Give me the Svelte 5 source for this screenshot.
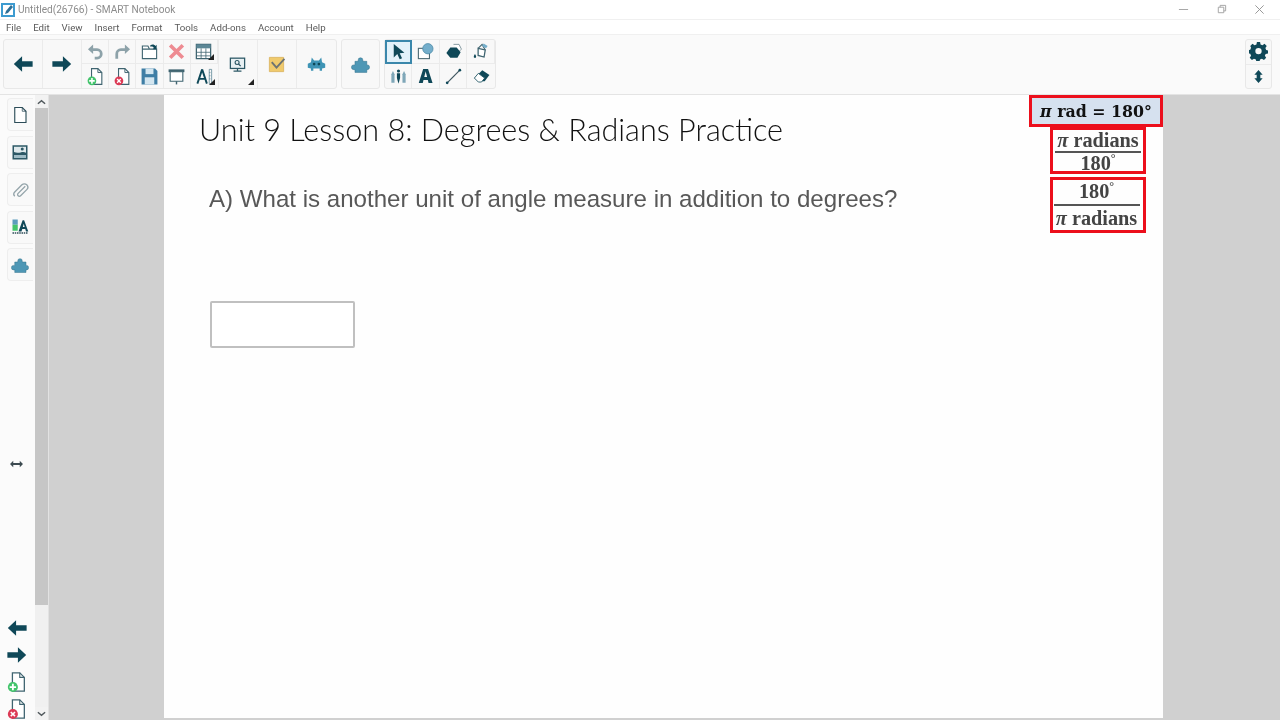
<script lang="ts">
	const menus = ['File', 'Edit', 'View', 'Insert', 'Format', 'Tools', 'Add-ons', 'Account', 'Help'];
	const tabs = ['page', 'gallery', 'attach', 'props', 'addons'];
</script>

{#snippet arrowLeft()}
	<svg class="ic" viewBox="0 0 24 24"><path d="M2 12 11 3.500v5.500h11.500v6H11v5.500z" fill="#0f4858" /></svg>
{/snippet}

{#snippet arrowRight()}
	<svg class="ic" viewBox="0 0 24 24"><path d="M22 12 13 3.500v5.500H1.500v6H13v5.500z" fill="#0f4858" /></svg>
{/snippet}

{#snippet addPage()}
	<svg class="ic" viewBox="0 0 24 24">
		<path d="M7 2h8l5 5v15H7z" fill="#fff" stroke="#3f6470" stroke-width="1.400" />
		<path d="M15 2v5h5" fill="none" stroke="#3f6470" stroke-width="1.200" />
		<circle cx="7.500" cy="17.500" r="5.500" fill="#43c46c" />
		<path d="M7.500 14v7M4 17.500h7" stroke="#fff" stroke-width="2" />
	</svg>
{/snippet}

{#snippet delPage()}
	<svg class="ic" viewBox="0 0 24 24">
		<path d="M7 2h8l5 5v15H7z" fill="#fff" stroke="#3f6470" stroke-width="1.400" />
		<path d="M15 2v5h5" fill="none" stroke="#3f6470" stroke-width="1.200" />
		<circle cx="7.500" cy="17.500" r="5.500" fill="#dc3a55" />
		<path d="M5.200 15.200l4.600 4.600M9.800 15.200l-4.600 4.600" stroke="#fff" stroke-width="1.700" />
	</svg>
{/snippet}

{#snippet puzzle()}
	<svg class="ic" viewBox="0 0 24 24">
		<path d="M9 8V6.500a3 3 0 1 1 6 0V8h5v4.500h.5a3 3 0 1 1 0 6H20V22H5v-3.500H3.500a3 3 0 1 1 0-6H5V8z" fill="#4e97b5" stroke="#2f6f89" stroke-width=".6" />
	</svg>
{/snippet}

<div class="window">
	<header class="titlebar">
		<svg class="app-icon" viewBox="0 0 14 14">
			<rect width="14" height="14" fill="#3d9bd0" />
			<rect x="2" y="2" width="10" height="10" fill="#fff" />
			<path d="M4 11 5 8l5-6 2 2-5 6z" fill="#2f6f95" />
		</svg>
		<span class="doc-title">Untitled(26766) - SMART Notebook</span>
		<div class="win-controls">
			<svg viewBox="0 0 12 12"><path d="M1 6h10" stroke="#a0a0a0" /></svg>
			<svg viewBox="0 0 12 12"><path d="M2.500 3.500h6v6h-6zM4.500 3.500v-2h6v6h-2" fill="none" stroke="#a0a0a0" /></svg>
			<svg viewBox="0 0 12 12"><path d="M1.500 1.500l9 9M10.500 1.500l-9 9" stroke="#909090" /></svg>
		</div>
	</header>

	<nav class="menubar">
		{#each menus as m}
			<span>{m}</span>
		{/each}
	</nav>

	<div class="toolbar">
		<div class="group main-tools">
			<button class="tall nav">{@render arrowLeft()}</button>
			<button class="tall nav">{@render arrowRight()}</button>
			<div class="grid six">
				<button><svg class="ic" viewBox="0 0 24 24"><path d="M9 3 2.500 9 9 15v-3.500h5a3.500 3.500 0 0 1 0 7h-3V22h3a7 7 0 0 0 0-14H9z" fill="#8da2a9" /></svg></button>
				<button><svg class="ic" viewBox="0 0 24 24"><path d="M15 3l6.500 6L15 15v-3.500h-5a3.500 3.500 0 0 0-3.500 3.500v6H3v-6a7 7 0 0 1 7-7h5z" fill="#8da2a9" /></svg></button>
				<button>
					<svg class="ic" viewBox="0 0 24 24">
						<path d="M3 9h18v12H3zM3 9V5h7l2 4" fill="#fff" stroke="#3f6470" stroke-width="1.400" />
						<path d="M13 4c3-1.500 5-1 6.500 1L21 3.500V9h-5l1.500-1.500C16.500 6 15 5.500 13 6z" fill="#0f4858" />
					</svg>
				</button>
				<button><svg class="ic" viewBox="0 0 24 24"><path d="M4 4l16 16M20 4 4 20" stroke="#ee8b92" stroke-width="4.600" /></svg></button>
				<button class="corner">
					<svg class="ic" viewBox="0 0 24 24">
						<rect x="3" y="3" width="18" height="18" fill="#fff" stroke="#3f6470" stroke-width="1.600" />
						<rect x="3" y="3" width="18" height="5" fill="#5c8796" />
						<path d="M3 13h18M3 17.500h18M9 8v13M15 8v13" stroke="#3f6470" />
					</svg>
				</button>
				<button>{@render addPage()}</button>
				<button>{@render delPage()}</button>
				<button>
					<svg class="ic" viewBox="0 0 24 24">
						<path d="M2 2h17l3 3v17H2z" fill="#3f7ea5" />
						<rect x="7" y="2" width="10" height="7" fill="#d4e6f0" />
						<rect x="6" y="13" width="12" height="9" fill="#d4e6f0" />
					</svg>
				</button>
				<button>
					<svg class="ic" viewBox="0 0 24 24">
						<path d="M2 3h20v3.500H2z" fill="#3f6470" />
						<path d="M4 6h16v12H4z" fill="#fff" stroke="#3f6470" stroke-width="1.400" />
						<path d="M12 18v4" stroke="#3f6470" stroke-width="1.800" />
					</svg>
				</button>
				<button class="corner">
					<svg class="ic" viewBox="0 0 24 24">
						<path d="M9 3 3 21M9 3l6 18M5 15h8" fill="none" stroke="#0f4858" stroke-width="2.400" />
						<path d="M18 3h3v18h-3zM18 7h1.500M18 11h1.500M18 15h1.500" fill="none" stroke="#5c8796" />
					</svg>
				</button>
			</div>
			<button class="tall corner wide">
				<svg class="ic" viewBox="0 0 24 24">
					<rect x="3" y="4" width="18" height="13" fill="#e8f0f3" stroke="#2c5866" stroke-width="1.600" />
					<circle cx="11.500" cy="9.500" r="2.500" fill="none" stroke="#2c5866" stroke-width="1.400" />
					<path d="M13.300 11.300 16 14M12 17v3M7 20.500h10" stroke="#2c5866" stroke-width="1.600" />
				</svg>
			</button>
			<button class="tall">
				<svg class="ic" viewBox="0 0 24 24">
					<path d="M3 3h18v18H3z" fill="#f0ca6c" stroke="#d9b05a" />
					<path d="M6 9l6 7 10-11" fill="none" stroke="#6d7372" stroke-width="2.400" />
				</svg>
			</button>
			<button class="tall">
				<svg class="ic" viewBox="0 0 24 24">
					<path d="M6 3l3 4h6l3-4 1 6 4 2v5l-4 1v3h-3v-3H8v3H5v-3l-4-1v-5l4-2z" fill="#3e94b5" />
					<circle cx="9" cy="11.500" r="1.700" fill="#0f4858" />
					<circle cx="15" cy="11.500" r="1.700" fill="#0f4858" />
				</svg>
			</button>
		</div>

		<div class="group">
			<button class="tall addons">{@render puzzle()}</button>
		</div>

		<div class="group">
			<div class="grid four">
				<button class="active"><svg class="ic" viewBox="0 0 24 24"><path d="M6 2.500v17l4.500-4.200 3 6.500 3-1.400-3-6.300 6-.6z" fill="#0f4858" /></svg></button>
				<button>
					<svg class="ic" viewBox="0 0 24 24">
						<rect x="3" y="8" width="14" height="13" fill="#fff" stroke="#4d6a74" stroke-width="1.400" />
						<circle cx="15" cy="8.500" r="6.500" fill="#74aecb" stroke="#4c8aa8" />
					</svg>
				</button>
				<button>
					<svg class="ic" viewBox="0 0 24 24">
						<path d="M12 3h7l3 6-3 3" fill="#fff" stroke="#6a838b" />
						<path d="M8 7h8l5 6-4 7H8l-5-6z" fill="#0f4858" />
					</svg>
				</button>
				<button>
					<svg class="ic" viewBox="0 0 24 24">
						<path d="M9 8l9 2-1.500 9-7.500-2z" fill="#fff" stroke="#3f6470" stroke-width="1.600" />
						<path d="M9 8l5-5 4 7" fill="none" stroke="#3f6470" stroke-width="1.400" />
						<path d="M5 15c-2 3-2 5 0 5s2-2 0-5z" fill="#0f4858" />
						<path d="M16 2l5 3-2 3-5-3z" fill="#74aecb" />
					</svg>
				</button>
				<button>
					<svg class="ic" viewBox="0 0 24 24">
						<path d="M5 5l-2 4v11h4V9z" fill="#7fa7b8" />
						<circle cx="12" cy="5" r="2" fill="#0f4858" />
						<path d="M10 8h4v6l-2 7-2-7z" fill="#0f4858" />
						<path d="M19 5l-2 4v11h4V9z" fill="#7fa7b8" />
					</svg>
				</button>
				<button><span class="big-a">A</span></button>
				<button>
					<svg class="ic" viewBox="0 0 24 24">
						<path d="M4 20 20 4" stroke="#3f5660" stroke-width="1.500" />
						<circle cx="4" cy="20" r="1.700" fill="#0f4858" />
						<circle cx="20" cy="4" r="1.700" fill="#0f4858" />
					</svg>
				</button>
				<button>
					<svg class="ic" viewBox="0 0 24 24">
						<path d="M13 4l9 6-6 8H8l-5-4z" fill="#0f4858" />
						<path d="M3 14l5-6 8 6-4 5H8z" fill="#fff" stroke="#0f4858" />
					</svg>
				</button>
			</div>
		</div>

		<div class="group side-tools">
			<button class="half">
				<svg class="ic" viewBox="0 0 24 24">
					<path fill="#0f4858" fill-rule="evenodd" d="M10 2h4l.6 3 2.400 1 2.600-1.700 2.800 2.800L20.700 9.700l1 2.300 2.300.6v3.800l-3 .6-1 2.400 1.700 2.600-2.800 2.800-2.600-1.700-2.400 1-.6 2.900h-4l-.6-3-2.400-1-2.600 1.700-2.800-2.800 1.700-2.600-1-2.400-3-.6v-4l3-.6 1-2.400L1.600 7.100 4.400 4.300 7 6l2.400-1zM12 9.500a4 4 0 1 0 0 8 4 4 0 0 0 0-8z" transform="translate(0 -2)" />
				</svg>
			</button>
			<button class="half">
				<svg class="ic small" viewBox="0 0 12 16"><path d="M6 1 10.500 6H8v4h2.500L6 15l-4.500-5H4V6H1.500z" fill="#0f4858" /></svg>
			</button>
		</div>
	</div>

	<div class="body">
		<aside class="sidebar">
			<div class="tabs">
				{#each tabs as t}
					<div class="tab">
						{#if t === 'page'}
							<svg class="ic" viewBox="0 0 24 24"><path d="M5 2h10l5 5v15H5z" fill="#fff" stroke="#2c4c58" stroke-width="1.500" /><path d="M15 2v5h5" fill="none" stroke="#2c4c58" /></svg>
						{:else if t === 'gallery'}
							<svg class="ic" viewBox="0 0 24 24"><rect x="2" y="3" width="20" height="19" fill="#2c5866" /><path d="M4 5h16v8c-5-3-9 2-16-1z" fill="#dfe9ec" /><circle cx="15" cy="8" r="2" fill="#2c5866" /><rect x="4" y="16" width="16" height="4" fill="#9fbcc6" /></svg>
						{:else if t === 'attach'}
							<svg class="ic" viewBox="0 0 24 24"><path d="M19 7 9.500 16.500a2.300 2.300 0 0 0 3.300 3.300L21 11.500a4.500 4.500 0 0 0-6.400-6.400L5 14.700a4 4 0 0 0 0 5.600" fill="none" stroke="#95a5ab" stroke-width="1.800" /></svg>
						{:else if t === 'props'}
							<svg class="ic" viewBox="0 0 24 24"><rect x="2" y="2" width="7" height="7" fill="#5c9cbd" /><rect x="2" y="9" width="7" height="8" fill="#45c46c" /><path d="M10 18 15.500 3h2L23 18h-3l-1-3.500h-4L14 18zM15.800 12h2.400L17 7.500z" fill="#0f4858" /><path d="M2 20h20" stroke="#2c4c58" stroke-width="2" stroke-dasharray="2 1" /></svg>
						{:else}
							{@render puzzle()}
						{/if}
					</div>
				{/each}
			</div>
			<svg class="resize" viewBox="0 0 14 8"><path d="M0 4l3.500-3.500v2.500h7V.5L14 4l-3.500 3.500V5h-7v2.500z" fill="#3c4a50" /></svg>
			<div class="page-nav">
				{@render arrowLeft()}
				{@render arrowRight()}
				{@render addPage()}
				{@render delPage()}
			</div>
		</aside>

		<div class="scrollbar">
			<div class="sb-btn"><svg viewBox="0 0 10 6"><path d="M1 5 5 1.500 9 5" fill="none" stroke="#50585c" stroke-width="1.600" /></svg></div>
			<div class="thumb"></div>
			<div class="track"></div>
			<div class="sb-btn"><svg viewBox="0 0 10 6"><path d="M1 1 5 4.500 9 1" fill="none" stroke="#50585c" stroke-width="1.600" /></svg></div>
		</div>

		<main class="workspace">
			<section class="page">
				<h1>Unit 9 Lesson 8: Degrees &amp; Radians Practice</h1>
				<p class="question">A) What is another unit of angle measure in addition to degrees?</p>
				<div class="answer"></div>

				<div class="formulas">
					<div class="box head"><span><i>π</i> rad = 180°</span></div>
					<div class="box frac">
						<span class="num"><i>π</i> radians</span>
						<span>180<sup>°</sup></span>
					</div>
					<div class="box frac tall-frac">
						<span class="num">180<sup>°</sup></span>
						<span><i>π</i> radians</span>
					</div>
				</div>
			</section>
		</main>
	</div>
</div>

<style>
	:global(body) {
		background: #fff;
		overflow: hidden;
	}

	.window {
		width: 1280px;
		height: 720px;
		display: flex;
		flex-direction: column;
		background: #fff;
		font-family: Roboto, 'Open Sans', sans-serif;
		overflow: hidden;
		filter: blur(0.5px);
	}

	.titlebar {
		height: 19px;
		display: flex;
		align-items: center;
		padding-left: 1px;
		flex: none;
	}

	.app-icon {
		width: 14px;
		height: 14px;
		margin-right: 3px;
	}

	.doc-title {
		font-size: 10.1px;
		color: #8c8c8c;
	}

	.win-controls {
		margin-left: auto;
		display: flex;
		gap: 27px;
		padding-right: 15px;
	}

	.win-controls svg {
		width: 11px;
		height: 11px;
	}

	.menubar {
		height: 16px;
		box-sizing: border-box;
		display: flex;
		align-items: center;
		gap: 12px;
		padding-left: 6px;
		font-size: 9.7px;
		color: #5a5a5a;
		border-top: 1px solid #f0f0f0;
		border-bottom: 1px solid #f0f0f0;
		flex: none;
	}

	.toolbar {
		height: 60px;
		box-sizing: border-box;
		background: #fafafa;
		display: flex;
		align-items: flex-start;
		gap: 4px;
		padding: 4px 8px 0 3px;
		border-bottom: 1px solid #e4e4e4;
		flex: none;
	}

	.group {
		height: 50px;
		display: flex;
		border: 1px solid #e8e8e8;
		border-radius: 3px;
		background: #f8f8f8;
		box-sizing: border-box;
	}

	.group button {
		border: none;
		border-right: 1px solid #ebebeb;
		background: none;
		padding: 0;
		margin: 0;
		display: flex;
		align-items: center;
		justify-content: center;
		position: relative;
	}

	.group button:last-child {
		border-right: none;
	}

	.tall {
		width: 39px;
		height: 100%;
	}

	.wide {
		width: 39px;
	}

	.addons {
		width: 37px;
	}

	.grid {
		display: grid;
		grid-template-rows: 1fr 1fr;
		grid-auto-flow: row;
		border-right: 1px solid #ebebeb;
	}

	.grid button {
		border-bottom: 1px solid #ebebeb;
	}

	.grid button:nth-last-child(-n + 4) {
		border-bottom: none;
	}

	.six {
		grid-template-columns: repeat(5, 27.2px);
	}

	.six button:nth-last-child(-n + 5) {
		border-bottom: none;
	}

	.four {
		grid-template-columns: repeat(4, 27.5px);
		border-right: none;
	}

	.ic {
		width: 19px;
		height: 19px;
		display: block;
	}

	.nav .ic {
		width: 22px;
		height: 22px;
	}

	.corner::after {
		content: '';
		position: absolute;
		right: 3px;
		bottom: 3px;
		border-style: solid;
		border-width: 0 0 6px 6px;
		border-color: transparent transparent #222 transparent;
	}

	.active {
		background: #e3f2fa !important;
		outline: 2px solid #3a87ab;
		outline-offset: -2px;
	}

	.big-a {
		font-family: 'Open Sans', sans-serif;
		font-weight: 800;
		font-size: 19px;
		line-height: 1;
		color: #0f4858;
	}

	.side-tools {
		margin-left: auto;
		width: 27px;
		flex-direction: column;
	}

	.half {
		flex: 1;
		width: 100%;
		border-right: none !important;
	}

	.half:first-child {
		border-bottom: 1px solid #ebebeb !important;
	}

	.half .ic.small {
		width: 11px;
		height: 15px;
	}

	.body {
		flex: 1;
		min-height: 0;
		display: flex;
		background: #d0d0d0;
	}

	.sidebar {
		width: 35px;
		flex: none;
		background: #fbfbfb;
		display: flex;
		flex-direction: column;
		align-items: center;
		box-sizing: border-box;
	}

	.tabs {
		display: flex;
		flex-direction: column;
		gap: 4.5px;
		padding: 3px 2px 0 7px;
		width: 100%;
		box-sizing: border-box;
	}

	.tab {
		height: 33px;
		display: flex;
		align-items: center;
		justify-content: center;
		padding-right: 2px;
		border: 1px solid #eee;
		border-right: none;
		border-radius: 4px 0 0 4px;
		background: #f9f9f9;
		box-sizing: border-box;
	}

	.tab .ic {
		width: 18px;
		height: 18px;
	}

	.resize {
		width: 13px;
		height: 8px;
		margin-top: 179px;
		margin-right: 3px;
	}

	.page-nav {
		margin-top: 149px;
		display: flex;
		flex-direction: column;
		gap: 5px;
		margin-right: 1px;
	}

	.page-nav .ic {
		width: 22px;
		height: 22px;
	}

	.scrollbar {
		width: 13px;
		flex: none;
		display: flex;
		flex-direction: column;
		background: #f0f0f0;
		border-right: 1px solid #e2e2e2;
	}

	.sb-btn {
		height: 13px;
		display: flex;
		align-items: center;
		justify-content: center;
		background: #f2f2f2;
		flex: none;
	}

	.sb-btn svg {
		width: 9px;
		height: 6px;
	}

	.thumb {
		height: 497px;
		background: #c6c6c6;
		flex: none;
	}

	.track {
		flex: 1;
	}

	.workspace {
		flex: 1;
		min-width: 0;
		background: #d0d0d0;
		padding-left: 115px;
		padding-bottom: 2px;
		display: flex;
	}

	.page {
		width: 999px;
		background: #fefefe;
		position: relative;
		box-sizing: border-box;
		padding-left: 35px;
	}

	h1 {
		margin: 15px 0 0;
		font-family: Lato, 'Open Sans', sans-serif;
		font-weight: 300;
		font-size: 30.6px;
		line-height: 40px;
		color: #111;
		white-space: nowrap;
	}

	.question {
		margin: 32px 0 0 10px;
		font-family: 'Liberation Sans', Arial, sans-serif;
		font-size: 24.1px;
		line-height: 34px;
		color: #585858;
		white-space: nowrap;
	}

	.answer {
		margin: 85px 0 0 11px;
		width: 145px;
		height: 47px;
		box-sizing: border-box;
		border: 2px solid #c0c0c0;
		border-radius: 2px;
		background: #fff;
	}

	.formulas {
		position: absolute;
		top: 0;
		right: 0;
		width: 134px;
		display: flex;
		flex-direction: column;
		align-items: flex-start;
		font-family: 'Liberation Serif', 'DejaVu Serif', serif;
		color: #222;
	}

	.box {
		box-sizing: border-box;
		border: 3px solid #ec0f1c;
		display: flex;
		align-items: center;
		justify-content: center;
		white-space: nowrap;
	}

	.head {
		width: 134px;
		height: 32px;
		background: #d6e1ef;
		font-family: 'DejaVu Serif', 'Liberation Serif', serif;
		font-weight: 700;
		font-size: 15.8px;
		color: #111;
	}

	.frac {
		width: 96px;
		height: 47px;
		margin-left: 21px;
		flex-direction: column;
		font-size: 20.3px;
		font-weight: 700;
		color: #444;
		line-height: 21px;
		padding-top: 2px;
	}

	.tall-frac {
		height: 56px;
		margin-top: 3px;
		line-height: 25px;
		padding-right: 3px;
		padding-top: 0;
	}

	.num {
		width: 86px;
		text-align: center;
		border-bottom: 2px solid #555;
	}

	sup {
		font-size: 12px;
		line-height: 0;
	}
</style>
